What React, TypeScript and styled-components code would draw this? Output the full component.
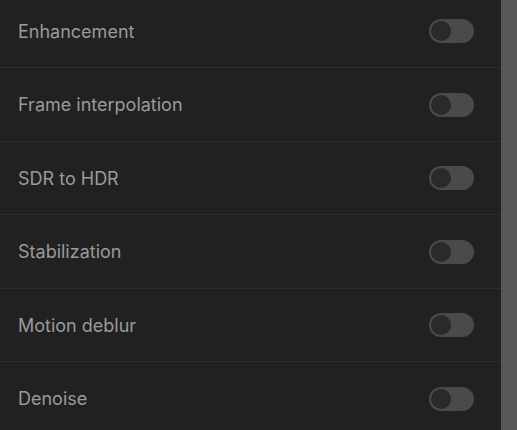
import styled, { createGlobalStyle } from "styled-components";

const GlobalStyle = createGlobalStyle`
  html, body {
    margin: 0;
    padding: 0;
    background: #212121;
    overflow: hidden;
  }
  body {
    font-family: Inter, "Noto Sans", sans-serif;
  }
`;

const Page = styled.div`
  display: flex;
  height: 430px;
  overflow: hidden;
`;

const Panel = styled.div`
  flex: 1;
  background: #212121;
  overflow: hidden;
`;

const List = styled.ul`
  list-style: none;
  margin: -5.5px 0 0;
  padding: 0;
`;

const Row = styled.li`
  display: flex;
  align-items: center;
  justify-content: space-between;
  box-sizing: border-box;
  height: 73.5px;
  padding: 1px 27px 0 18px;
  border-bottom: 1px solid #2d2d2d;
`;

const Label = styled.span`
  font-size: 18px;
  color: #9a9a9a;
`;

const Track = styled.span<{ $on?: boolean }>`
  position: relative;
  display: inline-block;
  width: 45px;
  height: 24px;
  border-radius: 12px;
  background: ${(p) => (p.$on ? "#6a8cff" : "#4a4a4a")};
`;

const Knob = styled.span<{ $on?: boolean }>`
  position: absolute;
  top: 2px;
  left: ${(p) => (p.$on ? "23px" : "2px")};
  width: 20px;
  height: 20px;
  border-radius: 50%;
  background: #2a2a2a;
`;

const ScrollStrip = styled.div`
  width: 16px;
  flex-shrink: 0;
  background: #575757;
`;

const options = [
  "Enhancement",
  "Frame interpolation",
  "SDR to HDR",
  "Stabilization",
  "Motion deblur",
  "Denoise",
];

const App = () => {
  return (
    <>
      <GlobalStyle />
      <Page>
        <Panel>
          <List>
            {options.map((name) => (
              <Row key={name}>
                <Label>{name}</Label>
                <Track>
                  <Knob />
                </Track>
              </Row>
            ))}
          </List>
        </Panel>
        <ScrollStrip />
      </Page>
    </>
  );
};

export default App;
